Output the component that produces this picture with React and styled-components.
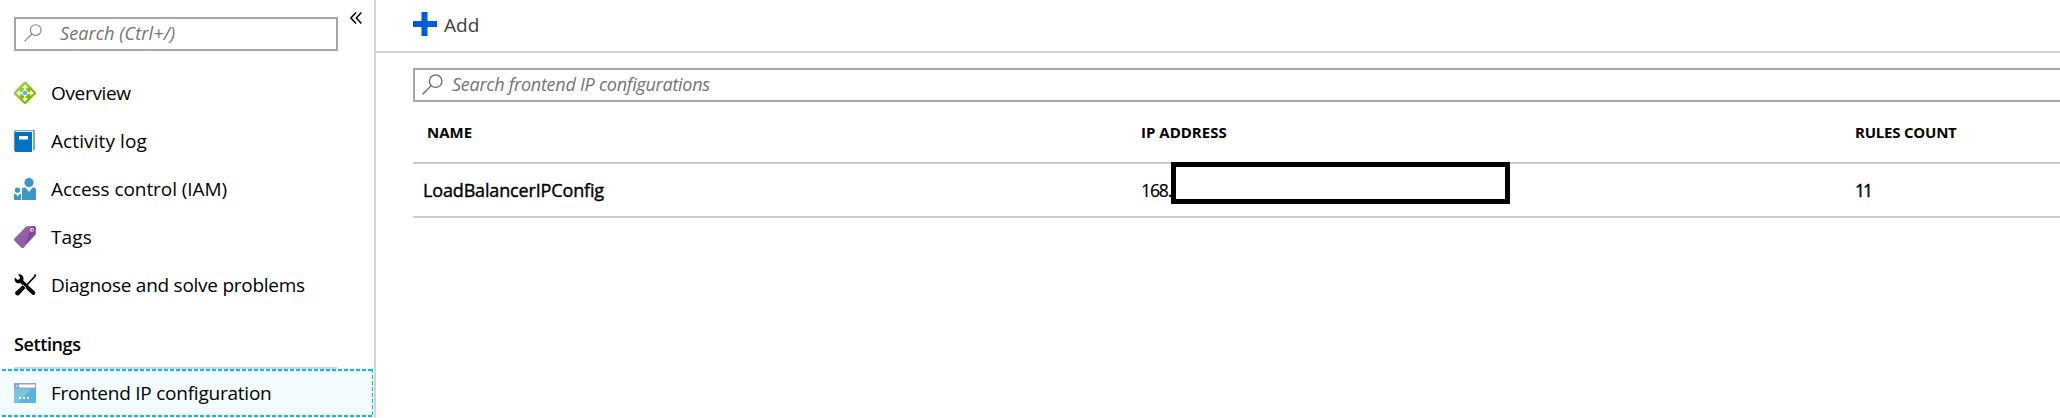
import React from "react";
import styled, { createGlobalStyle } from "styled-components";

const Global = createGlobalStyle`
  * { box-sizing: border-box; }
  body { margin: 0; background: #fff; color: #000; overflow: hidden;
    font-family: "Open Sans", "Noto Sans", sans-serif; }
`;
const Page = styled.div`display: flex; width: 100%; height: 418px; overflow: hidden;`;
const Sidebar = styled.aside`
  width: 376px; flex: none; height: 100%; border-right: 2px solid #d4d4d4;
  display: flex; flex-direction: column;
`;
const SideHead = styled.div`display: flex; height: 69px; padding: 17px 0 0 14px; gap: 12px;`;
const SearchBox = styled.div`
  display: flex; align-items: center; height: 34px; flex: ${p => (p.$fill ? "1" : "none")};
  width: ${p => p.$w || "auto"}; border: 2px solid #a6a6a6; ${p => p.$fill && "border-right: 0;"}
  padding: 0 0 2px ${p => p.$pad}px; gap: ${p => p.$gap}px;
`;
const Text = styled.span`
  display: block; white-space: nowrap; font-size: ${p => p.$size || 19}px; line-height: 26px;
  font-weight: ${p => p.$weight || 400}; letter-spacing: ${p => p.$ls || 0}px;
  color: ${p => p.$color || "#000"};
`;
const Value = styled(Text)`-webkit-text-stroke: ${p => p.$stroke ?? 0.4}px #000;`;
const Placeholder = styled(Text)`font-style: italic; color: #737373;`;
const Collapse = styled.svg`width: 12px; height: 12px; margin-top: -5px; flex: none;`;
const Nav = styled.nav`display: flex; flex-direction: column;`;
const Item = styled.div`
  display: flex; align-items: center; height: 48px; padding-left: 14px; gap: 15px;
`;
const GroupTitle = styled.div`
  height: 60px; margin: 0 37px 0 14px; padding-top: 22px; border-bottom: 2px solid #d4d4d4;
`;
const Selected = styled(Item)`
  width: 373px; background:
    repeating-linear-gradient(90deg, #00bcf2 0 4px, transparent 4px 6px) 2px 0 / 100% 2px no-repeat,
    repeating-linear-gradient(90deg, #00bcf2 0 4px, transparent 4px 6px) 2px 100% / 100% 2px no-repeat,
    repeating-linear-gradient(180deg, #00bcf2 0 4px, transparent 4px 6px) 100% 0 / 1px 100% no-repeat,
    #f3fcff;
`;
const Icon = styled.svg`width: 22px; height: 22px; flex: none; display: block;`;
const Main = styled.main`flex: 1; min-width: 0; display: flex; flex-direction: column;`;
const Toolbar = styled.div`
  display: flex; height: 53px; flex: none; border-bottom: 2px solid #d4d4d4; padding: 12px 0 0 37px; gap: 7px;
`;
const AddIcon = styled.svg`width: 24px; height: 24px; flex: none;`;
const Content = styled.section`padding: 15px 0 0 37px; display: flex; flex-direction: column;`;
const SearchLine = styled.div`display: flex;`;
const Row = styled.div`
  display: grid; grid-template-columns: 714px 714px 1fr; align-items: center;
  height: ${p => p.$h}px; border-bottom: 2px solid #cbcbcb; padding-bottom: ${p => p.$pb || 0}px;
`;
const Cell = styled.div`padding-left: ${p => p.$pad ?? 14}px; position: relative;`;
const Redaction = styled.div`
  position: absolute; left: 44px; top: -15px; width: 339px; height: 42px;
  border: 5px solid #000; background: #fff;
`;

const Magnifier = ({ size, color }) => (
  <svg width={size} height={size} viewBox="0 0 20 20" fill="none" stroke={color} strokeWidth="1.25">
    <circle cx="13" cy="6.8" r="6" /><path d="M8.8 11.1 0.6 19.3" />
  </svg>
);
const OverviewIcon = () => (
  <Icon viewBox="0 0 22 22">
    <path d="M9.700.6a1.800 1.800 0 0 1 2.600 0l9.100 9.100a1.800 1.800 0 0 1 0 2.600l-9.100 9.100a1.800 1.800 0 0 1-2.600 0L.6 12.300a1.800 1.800 0 0 1 0-2.600z" fill="#7fba00" />
    <path d="M9.700.6a1.800 1.800 0 0 1 2.600 0l4 4L5 16.700 .6 12.300a1.800 1.800 0 0 1 0-2.600z" fill="#97c930" />
    <path d="M11 4v14M4 11h14" stroke="#fff" strokeWidth="1.500" />
    <path d="M11 2.200 14 5.700H8zM11 19.800 8 16.300h6zM2.200 11 5.700 8v6zM19.800 11 16.300 14V8z" fill="#fff" />
    <circle cx="11" cy="11" r="3" fill="#fff" /><circle cx="11" cy="11" r="2.300" fill="#59b4d9" />
  </Icon>
);
const LogIcon = () => (
  <Icon viewBox="0 0 22 22">
    <path d="M2 0h19v20h-2V1.500H2z" fill="#76a9d0" /><path d="M1.500 1h17.500v1H1.500z" fill="#e8f1f8" />
    <path d="M1 0h1v1H1zM0 1h1v20H0z" fill="#5d8fb8" /><path d="M1 2h17v20H1z" fill="#0072c6" />
    <path d="M5 6h9v3.500H5z" fill="#fff" />
  </Icon>
);
const PeopleIcon = () => (
  <Icon viewBox="0 0 22 22" fill="#3999c6">
    <circle cx="15" cy="4.500" r="4.600" /><circle cx="3.500" cy="12.200" r="2.600" />
    <path d="M8 22V11.500Q8 9.500 10 9.500h1.500L15 14l3.500-4.500H20q2 0 2 2V22z" />
    <path d="M0 22v-5q0-1 1-1h1l1.700 2.500L5.300 16H6q1 0 1 1v5z" />
  </Icon>
);
const TagIcon = () => (
  <Icon viewBox="0 0 22 22">
    <path d="M12.500.6 20 0q2 0 2 2l-.3 6.500L9.500 21.500q-1 1-2 0L.5 14.500q-.8-1 0-1.800z" fill="#804998" />
    <path d="M12.500.6 17 .2 10.500 21q-1.500 1.500-3 .5L.5 14.500q-.8-1 0-1.800z" fill="#945fa8" />
    <circle cx="18" cy="3.800" r="1.900" fill="#fff" /><circle cx="18.300" cy="4" r="1.100" fill="#804998" />
  </Icon>
);
const ToolsIcon = () => (
  <Icon viewBox="0 0 22 22">
    <path d="M4 .4Q8.500-.4 9.500 4q0 1.500-.3 2.500L21 17.700q.8 1.300-.3 2.700-1.500 1.200-2.700.2L6.500 9.200Q2 10 .7 6.500.300 5 1 3.500L3.500 6l2-.7.500-2z" fill="#000" />
    <path d="M20.500.5 21.500 1.500 12 12" fill="none" stroke="#000" strokeWidth="1.600" />
    <path d="M8.800 11.200 11.500 14 5 21q-1.500 1.200-3.200-.2Q.4 19.200 1.600 17.700z" fill="#000" />
    <path d="M8.500 10.500l3.800 3.800" stroke="#fff" strokeWidth=".8" />
  </Icon>
);
const ConfigIcon = () => (
  <Icon viewBox="0 0 22 22">
    <path d="M0 1h22v6H0z" fill="#a0a1a2" /><path d="M5 2.500h16v3H5z" fill="#fff" />
    <path d="M0 6.500h22V21H0z" fill="#59b4d9" /><path d="M0 6.500h18L3.500 21H0z" fill="#7ac3e1" />
    <circle cx="2.600" cy="4" r="2.200" fill="#59b4d9" /><path d="M1.500 4h2.200M2.600 3v2" stroke="#fff" strokeWidth=".6" />
    <path d="M5 15h2v2H5zM9 15h2v2H9zM13 15h2v2h-2z" fill="#fff" />
  </Icon>
);

const items = [
  [OverviewIcon, "Overview", -0.33],
  [LogIcon, "Activity log", 0.1],
  [PeopleIcon, "Access control (IAM)", -0.07],
  [TagIcon, "Tags", 0.1],
  [ToolsIcon, "Diagnose and solve problems", -0.26],
];

export default function App() {
  return (
    <Page>
      <Global />
      <Sidebar>
        <SideHead>
          <SearchBox $w="324px" $pad={8} $gap={18}>
            <Magnifier size={18} color="#808080" />
            <Placeholder $size={18} $ls={0.12}>Search (Ctrl+/)</Placeholder>
          </SearchBox>
          <Collapse viewBox="0 0 12 12" fill="none" stroke="#000" strokeWidth="1.500">
            <path d="M6 .5.900 6 6 11.500M11.400.500 6.300 6l5.100 5.500" />
          </Collapse>
        </SideHead>
        <Nav>
          {items.map(([Glyph, label, ls]) => (
            <Item key={label}><Glyph /><Text $ls={ls}>{label}</Text></Item>
          ))}
          <GroupTitle><Text $size={18} $weight={600} $ls={-0.4}>Settings</Text></GroupTitle>
          <Selected><ConfigIcon /><Text $ls={-0.23}>Frontend IP configuration</Text></Selected>
        </Nav>
      </Sidebar>
      <Main>
        <Toolbar>
          <AddIcon viewBox="0 0 24 24"><path d="M8.500 0h6v9H24v6h-9.500v9h-6v-9H0V9h8.500z" fill="#015cda" /></AddIcon>
          <Text $color="#3c3c3c">Add</Text>
        </Toolbar>
        <Content>
          <SearchLine>
            <SearchBox $fill $pad={7} $gap={9}>
              <Magnifier size={21} color="#666" />
              <Placeholder $size={18} $ls={-0.26}>Search frontend IP configurations</Placeholder>
            </SearchBox>
          </SearchLine>
          <Row $h={62} $pb={1}>
            <Cell><Text $size={15} $weight={700}>NAME</Text></Cell>
            <Cell><Text $size={15} $weight={700}>IP ADDRESS</Text></Cell>
            <Cell><Text $size={15} $weight={700} $ls={-0.22}>RULES COUNT</Text></Cell>
          </Row>
          <Row $h={54}>
            <Cell $pad={10}><Value $size={18} $ls={-0.15}>LoadBalancerIPConfig</Value></Cell>
            <Cell><Value $size={17.5} $ls={-1.1} $stroke={0.2}>168.</Value><Redaction /></Cell>
            <Cell><Value $size={17.5} $ls={-2}>11</Value></Cell>
          </Row>
        </Content>
      </Main>
    </Page>
  );
}
